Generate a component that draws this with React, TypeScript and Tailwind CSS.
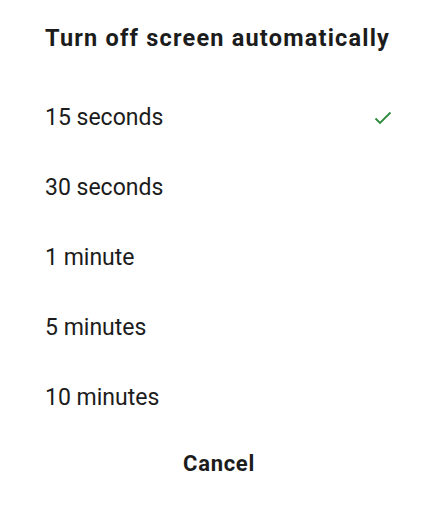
import React from "react";

const options = ["15 seconds", "30 seconds", "1 minute", "5 minutes", "10 minutes"];

export default function App() {
  return (
    <div className="w-[438px] h-[517px] bg-white overflow-hidden" style={{ fontFamily: "Roboto, 'Noto Sans', sans-serif" }}>
      <div className="w-full h-full bg-white rounded-[24px] flex flex-col px-[45px]">
        <div className="pt-[24px] h-[52px] text-[23.5px] leading-[28px] font-bold tracking-[1.2px] text-[#1c1c1c] whitespace-nowrap">
          Turn off screen automatically
        </div>
        <div className="mt-[31px] flex flex-col">
          {options.map((o, i) => (
            <div key={o} className="h-[70px] flex items-center justify-between text-[23px] text-[#1c1c1c]">
              <span>{o}</span>
              {i === 0 && (
                <svg width="18" height="14" viewBox="0 0 18 14" className="mr-[1px]">
                  <path d="M1.5 7.5 L6 12 L16.5 1.5" fill="none" stroke="#2b8a3b" strokeWidth="1.8" />
                </svg>
              )}
            </div>
          ))}
        </div>
        <div className="mt-[15px] h-[30px] flex items-center justify-center text-[22px] font-bold tracking-[0.7px] text-[#1c1c1c]">
          Cancel
        </div>
      </div>
    </div>
  );
}
